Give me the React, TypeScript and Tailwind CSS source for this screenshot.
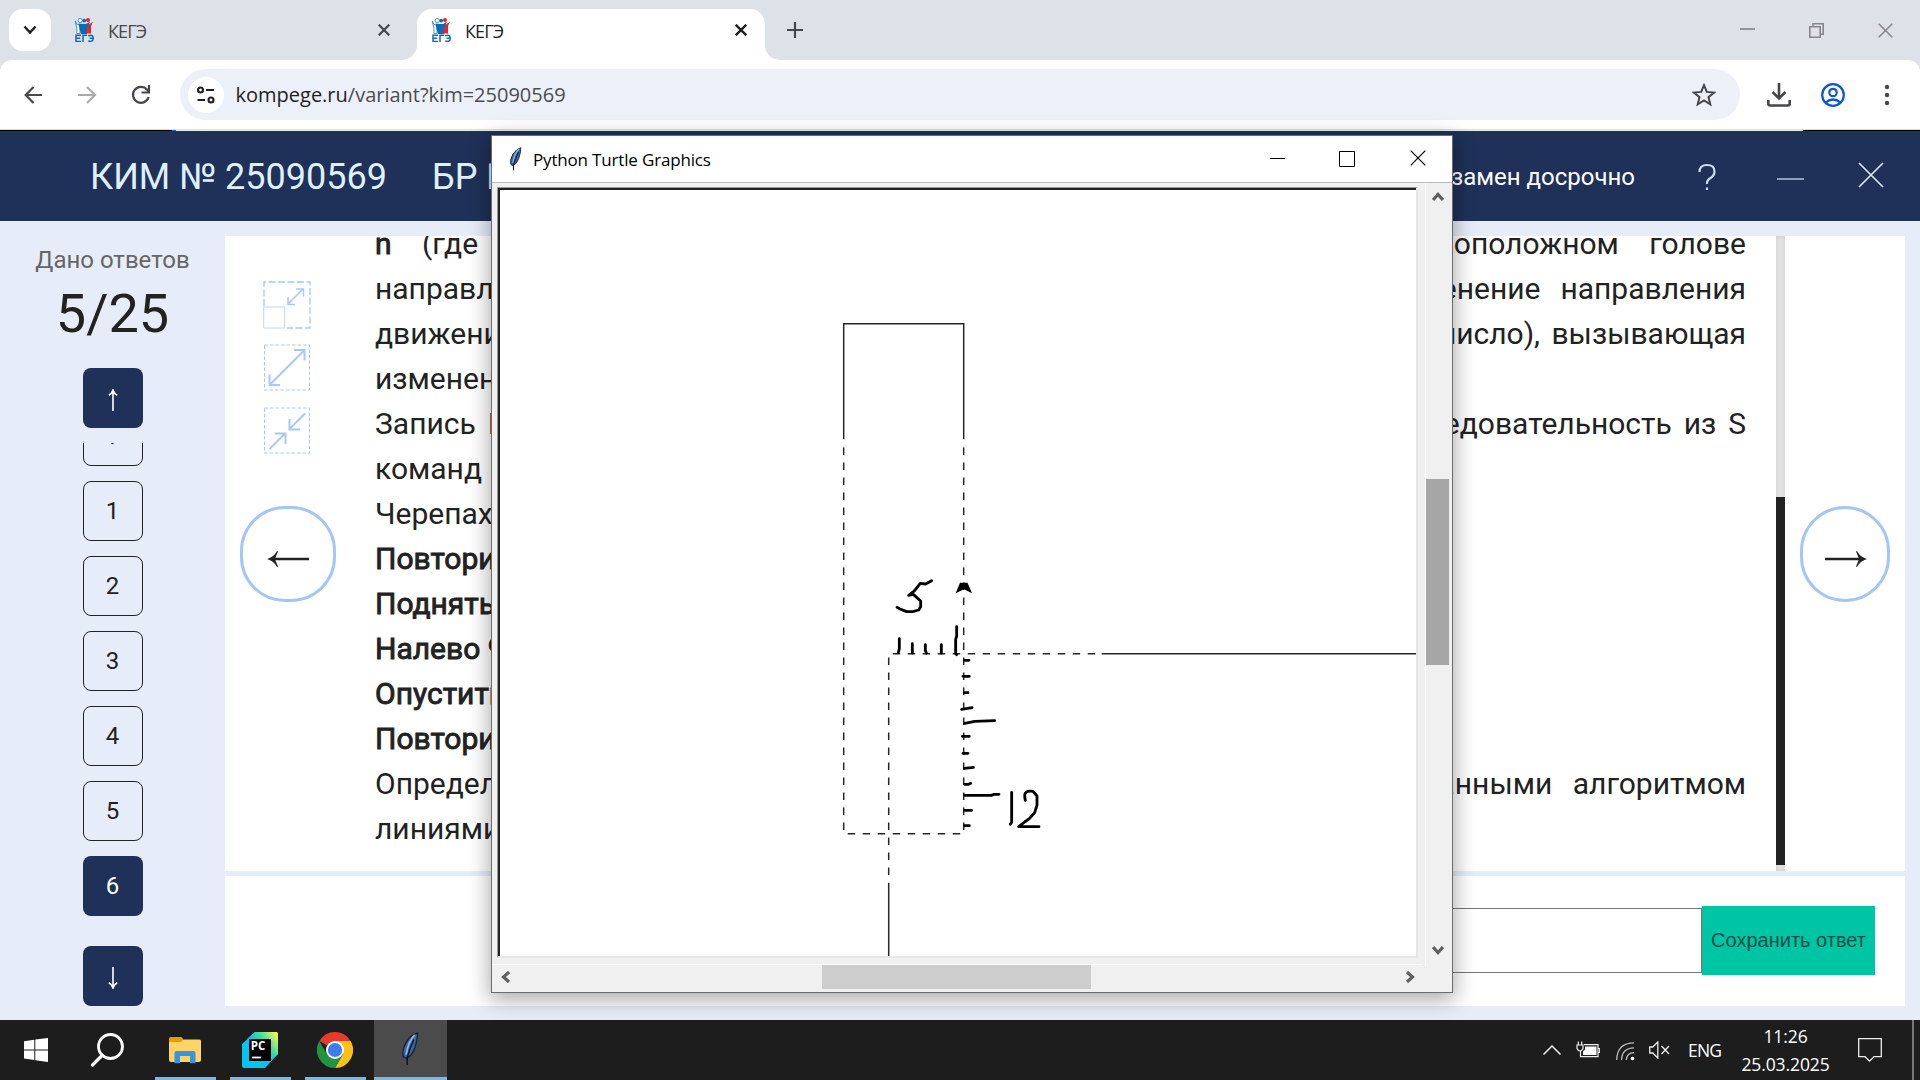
import React from "react";

const ui = "font-['Open_Sans','Noto_Sans',sans-serif]";

function Favicon() {
  return (
    <svg className="h-6 w-5 shrink-0" viewBox="0 0 20 24">
      <path d="M1.200 3l1.600 3.200L6 7.500v8H2.800L3 11z" fill="#fff" stroke="#0b6cb8" strokeWidth=".7" />
      <path d="M4.500 5.500L9 6h3l4-2.500-2 5.500-1 7H7l-1.500-5z" fill="#0b6cb8" />
      <path d="M14 7L19 3.800l-2 4.200v7.600h-5l1-4z" fill="#e5232c" />
      <circle cx="6.200" cy="2.500" r="2.100" fill="#fff" stroke="#0b6cb8" strokeWidth=".7" />
      <circle cx="10.200" cy="2.600" r="1.900" fill="#0b6cb8" />
      <circle cx="14" cy="2" r="2" fill="#e5232c" />
      <path d="M7 17.800H2V24h5M2 20.900h4.200M9 24.600v-6.800h4M14.200 18.400c4-1.600 5 .4 5 2.600s-1.500 3.800-5 2.500M15.500 20.900h3.500" transform="translate(0 -.6)" fill="none" stroke="#0b6cb8" strokeWidth="1.500" />
    </svg>
  );
}

function Cross({ size, color, width }: { size: number; color: string; width: number }) {
  return (
    <svg width={size} height={size} viewBox={`0 0 ${size} ${size}`} className="shrink-0">
      <path d={`M.7 .7L${size - 0.7} ${size - 0.7}M${size - 0.7} .7L.7 ${size - 0.7}`} stroke={color} strokeWidth={width} fill="none" />
    </svg>
  );
}

function TabStrip() {
  return (
    <div className={`flex h-[60px] shrink-0 bg-[#dde1e8] pl-[9px] pt-[9px] text-[18px] ${ui}`}>
      <div className="flex h-[42px] w-[42px] items-center justify-center rounded-[14px] bg-white">
        <svg width="14" height="10" viewBox="0 0 14 10"><path d="M1.500 1.500L7 7.500l5.500-6" fill="none" stroke="#1f1f1f" strokeWidth="2.400" /></svg>
      </div>
      <div className="ml-[23px] flex h-[42px] w-[316px] items-center">
        <Favicon />
        <span className="ml-[14px] mt-[3px] tracking-[-0.9px] text-[#45474a]">КЕГЭ</span>
        <span className="ml-auto"><Cross size={12} color="#45474a" width={2.200} /></span>
      </div>
      <div className="relative ml-[27px] flex h-[51px] w-[348px] items-start rounded-t-[15px] bg-white pl-[14px] pr-[18px]">
        <svg className="absolute -left-[15px] bottom-0" width="15" height="15"><path d="M15 0v15H0A15 15 0 0 0 15 0z" fill="#fff" /></svg>
        <svg className="absolute -right-[15px] bottom-0" width="15" height="15"><path d="M0 0v15h15A15 15 0 0 1 0 0z" fill="#fff" /></svg>
        <div className="flex h-[42px] w-full items-center">
          <Favicon />
          <span className="ml-[14px] mt-[3px] tracking-[-0.9px] text-[#1f1f1f]">КЕГЭ</span>
          <span className="ml-auto"><Cross size={12} color="#1f1f1f" width={2.400} /></span>
        </div>
      </div>
      <div className="ml-[22px] flex h-[42px] w-4 items-center">
        <svg width="16" height="16"><path d="M8 0v16M0 8h16" stroke="#45474a" strokeWidth="2.200" /></svg>
      </div>
      <div className="ml-auto mr-[27px] flex h-[42px] items-center gap-[54px]">
        <svg width="15" height="16"><path d="M0 7h15" stroke="#85888d" strokeWidth="1.700" /></svg>
        <svg width="15" height="15"><path d="M.8 3.800h10.400v10.400H.8zM4 3.500V.8h10.200v10.400H11.500" fill="none" stroke="#85888d" strokeWidth="1.600" /></svg>
        <Cross size={15} color="#85888d" width={1.600} />
      </div>
    </div>
  );
}

function Toolbar() {
  return (
    <div className="shrink-0 bg-[#dde1e8]">
      <div className={`flex h-[69px] items-center rounded-t-[12px] bg-white ${ui}`}>
        <svg className="ml-[24px]" width="19" height="18" viewBox="0 0 19 18"><path d="M18 9H2M9.500 1L1.700 9l7.800 8" fill="none" stroke="#45474a" strokeWidth="2.200" /></svg>
        <svg className="ml-[35px]" width="19" height="18" viewBox="0 0 19 18"><path d="M0 9h16M9 1l8 8-8 8" fill="none" stroke="#a9abae" strokeWidth="2.200" /></svg>
        <svg className="ml-[34px]" width="20" height="20" viewBox="0 0 20 20">
          <path d="M17.700 12A8 8 0 1 1 16 4.500L18 6.800" fill="none" stroke="#45474a" strokeWidth="2.200" />
          <path d="M18 0v7.500h-7.500" fill="none" stroke="#45474a" strokeWidth="2.200" />
        </svg>
        <div className="ml-[29px] flex h-[51px] w-[1560px] items-center rounded-full bg-[#ebf0f9] pl-[8px]">
          <div className="flex h-9 w-9 items-center justify-center rounded-full bg-white">
            <svg width="20" height="18" viewBox="0 0 20 18">
              <g fill="none" stroke="#1f1f1f" strokeWidth="2.100">
                <circle cx="4.500" cy="4" r="2.500" /><path d="M10 4h8M1.500 14H9" /><circle cx="15" cy="14" r="2.500" />
              </g>
            </svg>
          </div>
          <span className="ml-[11.5px] text-[20px] text-[#4b4d50]"><span className="text-[#1f1f1f]">kompege.ru</span>/variant?kim=25090569</span>
          <svg className="ml-auto mr-[24px]" width="24" height="24" viewBox="0 0 24 24"><path d="M12 2.200l2.800 6.700 7.300.6-5.600 4.700 1.800 7.100L12 17.400l-6.300 3.900 1.800-7.100L1.900 9.500l7.300-.6z" fill="none" stroke="#45474a" strokeWidth="2" /></svg>
        </div>
        <svg className="ml-[27px]" width="24" height="24" viewBox="0 0 24 24"><path d="M12 0v15M5.500 9l6.500 6.500L18.500 9M1.300 17v3.500q0 2 2 2h17.400q2 0 2-2V17" fill="none" stroke="#45474a" strokeWidth="2.600" /></svg>
        <svg className="ml-[30px]" width="24" height="24" viewBox="0 0 24 24"><g fill="none" stroke="#0b57d0" strokeWidth="2.200"><circle cx="12" cy="12" r="10.800" /><circle cx="12" cy="9.500" r="3.700" /><path d="M4.500 19.500q7.500-6 15 0" /></g></svg>
        <svg className="ml-[38px]" width="8" height="22" viewBox="0 0 8 22" fill="#45474a"><circle cx="4" cy="3" r="2.200" /><circle cx="4" cy="11" r="2.200" /><circle cx="4" cy="19" r="2.200" /></svg>
      </div>
      <div className="h-px bg-[#dcdcd8]" />
      <div className="flex h-px bg-[#eeeeec]">
        <div className="w-[172px] bg-black" />
        <div className="w-1 bg-[#1a5fe0]" />
        <div className="ml-auto w-[117px] bg-black" />
      </div>
    </div>
  );
}

function ExamHeader() {
  return (
    <div className="flex h-[90px] shrink-0 items-center bg-[#1f3158] pl-[90px] pr-[36px] font-[Roboto,sans-serif] text-[#dff0ff]">
      <span className="mt-[2px] w-[342px] whitespace-nowrap text-[36px]">КИМ № 25090569</span>
      <span className="mt-[2px] whitespace-nowrap text-[36px]">БР №</span>
      <span className="ml-auto mt-[2px] whitespace-nowrap text-[24px] text-white">Экзамен досрочно</span>
      <svg className="ml-[63px] mt-px" width="18" height="28" viewBox="0 0 18 28"><path d="M1.500 9Q1.500 2 9 2t7.500 6.500q0 4-4 6.500T9 21M9 24.500V27" fill="none" stroke="#cfdcf0" strokeWidth="2.200" /></svg>
      <svg className="ml-[61px] mt-[6px]" width="27" height="4"><path d="M0 2h27" stroke="#aebcd6" strokeWidth="1.600" /></svg>
      <svg className="mb-[3px] ml-[54px]" width="26" height="26"><path d="M1 1l24 24M25 1L1 25" stroke="#dbe6f7" strokeWidth="1.700" /></svg>
    </div>
  );
}

function NavButton({ up }: { up?: boolean }) {
  return (
    <div className="flex h-[60px] w-[60px] shrink-0 items-center justify-center rounded-[8px] bg-[#1f3158]">
      <svg className={up ? "mt-1" : "mt-1 rotate-180"} width="10" height="22" viewBox="0 0 10 22"><path d="M5 1v21M.8 6.200Q4 4.500 5 1 6 4.500 9.200 6.200" fill="none" stroke="#fff" strokeWidth="1.600" /></svg>
    </div>
  );
}

function Sidebar() {
  return (
    <div className="flex w-[225px] shrink-0 flex-col items-center font-[Roboto,sans-serif] text-[#222]">
      <div className="mt-[25px] h-7 text-[24px] leading-7 text-[#666]">Дано ответов</div>
      <div className="mt-[9px] h-[62px] text-[54px] leading-[62px]">5/25</div>
      <div className="mt-[23px]"><NavButton up /></div>
      <div className="mt-[15px] flex h-[473px] flex-col justify-end gap-[15px] overflow-hidden text-[24px]">
        {["i", "1", "2", "3", "4", "5", "6"].map((n) => (
          <div
            key={n}
            className={
              n === "6"
                ? "flex h-[60px] w-[60px] shrink-0 items-center justify-center rounded-[8px] bg-[#1f3158] text-white"
                : "flex h-[60px] w-[60px] shrink-0 items-center justify-center rounded-[8px] border border-[#222]"
            }
          >
            {n}
          </div>
        ))}
      </div>
      <div className="mt-[30px]"><NavButton /></div>
    </div>
  );
}

function ZoomIcons() {
  return (
    <div className="mt-[45px] flex flex-col items-center gap-[15px] pr-[2px]">
      <svg width="48" height="48" viewBox="0 0 48 48" fill="none" stroke="#a9c7f8">
        <path d="M1 25V1h46v46H24" strokeWidth="1.300" strokeDasharray="7 2.500" />
        <path d="M.7 26h21v21H.7z" strokeWidth="1" strokeOpacity=".75" />
        <path d="M25 23L40 8M33 8h7.500v7.500M25 16v7.500h7" strokeWidth="1.500" />
      </svg>
      <svg width="48" height="48" viewBox="0 0 48 48" fill="none" stroke="#a9c7f8">
        <path d="M1.500 1h45v45h-45z" strokeWidth="1.100" strokeDasharray="3.500 2" />
        <path d="M7 40.500L41 6.500M31 6h10.500v10.500M6.500 30.500V41H17" strokeWidth="2" />
      </svg>
      <svg width="48" height="48" viewBox="0 0 48 48" fill="none" stroke="#a9c7f8">
        <path d="M1.500 1h45v45h-45z" strokeWidth="1.100" strokeDasharray="3.500 2" />
        <path d="M6.500 42L22 26.500M12 26.500h10.500V37M42 6.500L26.500 22M26.500 12v10.500H37" strokeWidth="2" />
      </svg>
    </div>
  );
}

function Arrow({ right }: { right?: boolean }) {
  return (
    <svg className={right ? "ml-px mt-[9px] rotate-180" : "mr-px mt-[9px]"} width="42" height="18" viewBox="0 0 42 18">
      <path d="M3 9h39" stroke="#222" strokeWidth="2.400" />
      <path d="M0 9Q7 7 10 1L11 1.500Q9 6 8 9q1 3 3 7.500L10 17Q7 11 0 9z" fill="#222" />
    </svg>
  );
}

const faux = "[-webkit-text-stroke:0.9px_#222]";

function TaskText() {
  return (
    <div className="-mt-[15px] w-[1371px] text-[30px] leading-[45px] text-[#222]">
      <div className="flex justify-between [word-spacing:23px]">
        <span><span className={faux}>n</span> (где</span>
        <span>противоположном голове</span>
      </div>
      <div className="flex justify-between [word-spacing:12.5px]">
        <span>направлении;</span>
        <span>изменение направления</span>
      </div>
      <div className="flex justify-between [word-spacing:4px]">
        <span>движения</span>
        <span>число), вызывающая</span>
      </div>
      <div>изменение</div>
      <div className="flex justify-between [word-spacing:4.5px]">
        <span>Запись Повтори</span>
        <span>последовательность из S</span>
      </div>
      <div>команд повторится</div>
      <div>Черепахе</div>
      <div className={faux}>Повтори</div>
      <div className={faux}>Поднять</div>
      <div className={faux}>Налево 90</div>
      <div className={faux}>Опустить</div>
      <div className={faux}>Повтори</div>
      <div className="flex justify-between [word-spacing:13px]">
        <span>Определите,</span>
        <span>заданными алгоритмом</span>
      </div>
      <div>линиями.</div>
    </div>
  );
}

function Exam() {
  return (
    <div className="flex min-h-0 flex-1 bg-[#e6edf9] font-[Roboto,sans-serif]">
      <Sidebar />
      <div className="mt-[15px] flex w-[1680px] flex-col gap-[5px]">
        <div className="flex h-[635px] overflow-hidden bg-white">
          <div className="flex w-[126px] shrink-0 flex-col items-center">
            <ZoomIcons />
            <div className="mt-[51px] flex h-24 w-24 items-center justify-center rounded-[45px] border-[3px] border-[#a6c5f7]"><Arrow /></div>
          </div>
          <div className="ml-[24px] w-[1401px] shrink-0"><TaskText /></div>
          <div className="flex w-[9px] shrink-0 flex-col bg-[#e3e3e3] pb-[6px] shadow-[inset_0_0_5px_#ccc]">
            <div className="mt-auto h-[368px] bg-[#222]" />
          </div>
          <div className="ml-[15px] mt-[270px] flex h-24 w-[90px] shrink-0 items-center justify-center rounded-[45px] border-[3px] border-[#a6c5f7]"><Arrow right /></div>
        </div>
        <div className="flex h-[130px] items-center bg-white pb-px pl-[300px] pr-[30px]">
          <div className="h-[65px] flex-1 border border-[#767676]" />
          <div className="flex h-[69px] w-[173px] items-center justify-center whitespace-nowrap bg-[#00c5a5] pb-[2px] font-['Liberation_Sans',sans-serif] text-[20px] text-[#0a4f49]">Сохранить ответ</div>
        </div>
      </div>
    </div>
  );
}

function Feather({ w, h }: { w: number; h: number }) {
  return (
    <svg width={w} height={h} viewBox="0 0 18 36">
      <path d="M17 1Q10 3 5 11T2 26l3 2q6-2 9-11T17 1z" fill="#3468a8" stroke="#15202e" strokeWidth="1.300" />
      <path d="M14 3Q7 10 5 24" fill="none" stroke="#8fb8e8" strokeWidth="1.800" />
      <path d="M13 8Q9 17 6 27v8" fill="none" stroke="#111" strokeWidth="1.500" />
    </svg>
  );
}

function Chevron({ turn }: { turn: string }) {
  return (
    <svg className={`shrink-0 ${turn}`} width="12" height="10" viewBox="0 0 12 10"><path d="M1 8l5-5.500L11 8" fill="none" stroke="#606060" strokeWidth="3.200" /></svg>
  );
}

/* Turtle drawing; coordinates are desktop pixels. */
function TurtleCanvas() {
  return (
    <svg className="block" width="917" height="767" viewBox="500 190 917 767" fill="none">
      <g stroke="#262626" strokeWidth="1.500">
        <path d="M843.700 439.300V323.700h120v115.600" />
        <path d="M1101.700 653.700H1416M888.700 882.700V956" />
        <g strokeDasharray="7.500 7.500">
          <path d="M843.700 447.500V833M963.700 447.500V833" />
          <path d="M847.700 833.700H962M892.700 653.700H1100M888.700 657.500V880" />
        </g>
      </g>
      <path d="M955.700 593.300l4.300-10.600h7.500l4.500 10.600-8-4z" fill="#000" />
      <g transform="translate(800 300) scale(.33333)" stroke="#000" strokeWidth="8.500" strokeLinecap="round" strokeLinejoin="round">
        <path d="M395 842l-18 10-16-2-18 23-17 13 14-3 22 20v17l-6 10-18 5h-18l-20-8-9-5" />
        <path d="M298 1016v30l-3 12M337 1031v28M376 1034v17l3 8M424 1034v26M470 980v28l-3 10v42l3 4" />
        <path d="M493 1081h14M489 1129h19M493 1178h11M485 1228l31-5M494 1270l30-6 60-2M487 1309h21M489 1360h15M493 1405l27-3M494 1453h12l6-3M494 1486h80l8-3h15M494 1531h21M494 1577h14" />
        <path d="M635 1477v90l-4 6M676 1501q-6-25 8-27t17 2l10 12v28l-7 22-16 18-14 10-18 14h61" />
      </g>
    </svg>
  );
}

function TurtleWindow() {
  return (
    <div className="absolute left-[491px] top-[135px] flex h-[858px] w-[962px] flex-col border border-[#6b6b6b] bg-[#f0f0f0] shadow-[0_5px_20px_2px_rgba(0,0,0,0.33)]">
      <div className={`flex h-[46px] shrink-0 items-center bg-white pl-[17px] pr-[26px] text-[17px] text-black ${ui}`}>
        <Feather w={13} h={24} />
        <span className="ml-[11px] mt-[2px] whitespace-nowrap tracking-[-0.17px]">Python Turtle Graphics</span>
        <svg className="ml-auto" width="16" height="15"><path d="M0 6.500h15" stroke="#000" strokeWidth="1" /></svg>
        <svg className="mb-px ml-[53px]" width="16" height="16"><path d="M.5 .5h15v15H.5z" fill="none" stroke="#000" /></svg>
        <span className="mb-[2px] ml-[55px]"><Cross size={16} color="#000" width={1.200} /></span>
      </div>
      <div className="h-px shrink-0 bg-[#bdbdbd]" />
      <div className="flex min-h-0 flex-1">
        <div className="flex flex-col">
          <div className="ml-[5px] mt-[4px] h-[771px] w-[921px] border-b-2 border-l border-r-2 border-t border-b-[#e6e6e6] border-l-[#9a9a9a] border-r-[#e6e6e6] border-t-[#9a9a9a]">
            <div className="h-full w-full overflow-hidden border-l-2 border-t-2 border-[#222] bg-white"><TurtleCanvas /></div>
          </div>
          <div className="mt-[6px] h-px w-[930px] bg-white" />
          <div className="flex h-6 w-[933px] items-center pl-[8px] pr-[9px]">
            <Chevron turn="-rotate-90" />
            <div className="ml-[310px] h-6 w-[269px] bg-[#cdcdcd]" />
            <span className="ml-auto"><Chevron turn="rotate-90" /></span>
          </div>
        </div>
        <div className="flex h-[783px] w-6 flex-col items-center border-l border-white pb-[11px] pt-[9px]">
          <Chevron turn="rotate-0" />
          <div className="mt-[277px] h-[186px] w-[23px] bg-[#a6a6a6]" />
          <span className="mt-auto"><Chevron turn="rotate-180" /></span>
        </div>
      </div>
    </div>
  );
}

function TaskItem({ cls, children }: { cls: string; children: React.ReactNode }) {
  return <div className={`flex h-[60px] shrink-0 items-center justify-center ${cls}`}>{children}</div>;
}

function Taskbar() {
  return (
    <div className={`flex h-[60px] shrink-0 items-center bg-[#1d1d1d] text-white ${ui}`}>
      <svg className="ml-6" width="24" height="24" viewBox="0 0 24 24" fill="#fff"><path d="M0 3.200l10.300-1.400v9.600H0zM11.300 1.600L24 0v11.400H11.300zM0 12.400h10.300V22L0 20.600zM11.300 12.400H24V24l-12.700-1.800z" /></svg>
      <svg className="ml-[42px]" width="36" height="36" viewBox="0 0 36 36" fill="none" stroke="#fff"><circle cx="20.500" cy="14.500" r="12" strokeWidth="2.800" /><path d="M12 23.500L2.500 33" strokeWidth="3.200" strokeLinecap="round" /></svg>
      <TaskItem cls="ml-[29px] w-[61px] border-b-[3px] border-[#76b9ed] pr-[2px]">
        <svg className="mt-[3px]" width="32" height="28" viewBox="0 0 32 28">
          <path d="M0 2.500q0-1.500 1.500-1.500H12q1 0 1.500 1l1 2.500v3H0z" fill="#e2a000" />
          <path d="M0 6h12l2-2.500h16.500q1.500 0 1.500 1.500v19q0 2-2 2H2q-2 0-2-2z" fill="#ffd368" />
          <path d="M5.500 27.300V17q0-2 2-2h17q2 0 2 2v10.300H21V20H11v7.300z" fill="#3a93dd" />
        </svg>
      </TaskItem>
      <TaskItem cls="ml-[14px] w-[61px] border-b-[3px] border-[#76b9ed] pr-px">
        <svg className="mt-[3px]" width="36" height="36" viewBox="0 0 36 36">
          <defs><linearGradient id="pc" x1=".35" y1=".55" x2="1" y2=".1"><stop offset="0" stopColor="#07c3f2" /><stop offset=".35" stopColor="#35d8a8" /><stop offset="1" stopColor="#fcf84a" /></linearGradient></defs>
          <path d="M13 0h21q2 0 2 2v20L23 36H2q-2 0-2-2V12z" fill="#07c3f2" />
          <path d="M13 0h21q2 0 2 2v20l-7 6V7H5z" fill="url(#pc)" />
          <path d="M7 7h22v22H7z" fill="#000" />
          <path d="M10 25.500h9" stroke="#fff" strokeWidth="1.800" />
          <text x="8.800" y="18" fontFamily="Open Sans" fontWeight="700" fontSize="11.500" fill="#fff">PC</text>
        </svg>
      </TaskItem>
      <TaskItem cls="ml-[14px] w-[61px] border-b-[3px] border-[#76b9ed] pr-px">
        <svg className="mt-[3px]" width="36" height="36" viewBox="0 0 36 36">
          <path d="M18 18L2.400 9A18 18 0 0 1 33.600 9z" fill="#e33b2e" />
          <path d="M18 18V9h15.600A18 18 0 0 1 18 36l7.800-13.500z" fill="#fbc116" />
          <path d="M2.400 9A18 18 0 0 0 18 36l7.800-13.500H10.200z" fill="#229342" />
          <circle cx="18" cy="18" r="9" fill="#fff" /><circle cx="18" cy="18" r="7.100" fill="#3b7ded" />
        </svg>
      </TaskItem>
      <TaskItem cls="ml-[8px] w-[73px] border-b-[3px] border-[#76b9ed] bg-[#4b4b4b] pr-px"><Feather w={18} h={34} /></TaskItem>
      <svg className="ml-auto mb-[1px]" width="18" height="10" viewBox="0 0 18 10"><path d="M.5 9.500L9 1l8.500 8.500" fill="none" stroke="#eee" strokeWidth="1.500" /></svg>
      <svg className="ml-[15px] mb-[2px]" width="24" height="17" viewBox="0 0 24 17" fill="none" stroke="#eee" strokeWidth="1.200">
        <path d="M8 3.600h14v12H4.500V10M22.500 7.500h1.200v4h-1.200M1 4h6v3.500Q6 10 4 10T1 7.500zM2.300 4V.5M5.700 4V.5" /><path d="M9 5.500h11.500v8.500H7V10.500l2-2z" fill="#fff" stroke="none" />
      </svg>
      <svg className="ml-[16px] mt-[2px]" width="19" height="19" viewBox="0 0 19 19" fill="none" stroke="#bbb" strokeWidth="1.300">
        <path d="M.7 18Q1 1 18 .8M5.500 18Q6 6 18 5.800M10.300 18q.5-7.200 7.700-7.400" /><circle cx="16.500" cy="16.500" r="1.800" fill="#fff" stroke="none" />
      </svg>
      <svg className="ml-[14px]" width="21" height="18" viewBox="0 0 21 18" fill="none" stroke="#eee" strokeWidth="1.300"><path d="M.7 6h3L8.800 1v16l-5-5h-3zM12.500 5l7.500 8M20 5l-7.500 8" /></svg>
      <span className="ml-[18px] w-[34px] whitespace-nowrap text-[17.500px] tracking-[-0.8px]">ENG</span>
      <div className="ml-[18px] flex w-[91px] flex-col items-center whitespace-nowrap text-[17.500px] leading-7 tracking-[-0.1px]"><span>11:26</span><span>25.03.2025</span></div>
      <svg className="ml-[27px]" width="24" height="25" viewBox="0 0 24 25" fill="none" stroke="#eee" strokeWidth="1.300"><path d="M.7 .7h22.600v18H16l-4.500 4.500L7 18.700H.7z" /></svg>
      <div className="ml-[30px] mr-[6px] h-[60px] w-[2px] bg-[#777]" />
    </div>
  );
}

export default function App() {
  return (
    <div className="relative flex h-[1080px] w-[1920px] flex-col overflow-hidden">
      <TabStrip />
      <Toolbar />
      <ExamHeader />
      <Exam />
      <Taskbar />
      <TurtleWindow />
    </div>
  );
}
